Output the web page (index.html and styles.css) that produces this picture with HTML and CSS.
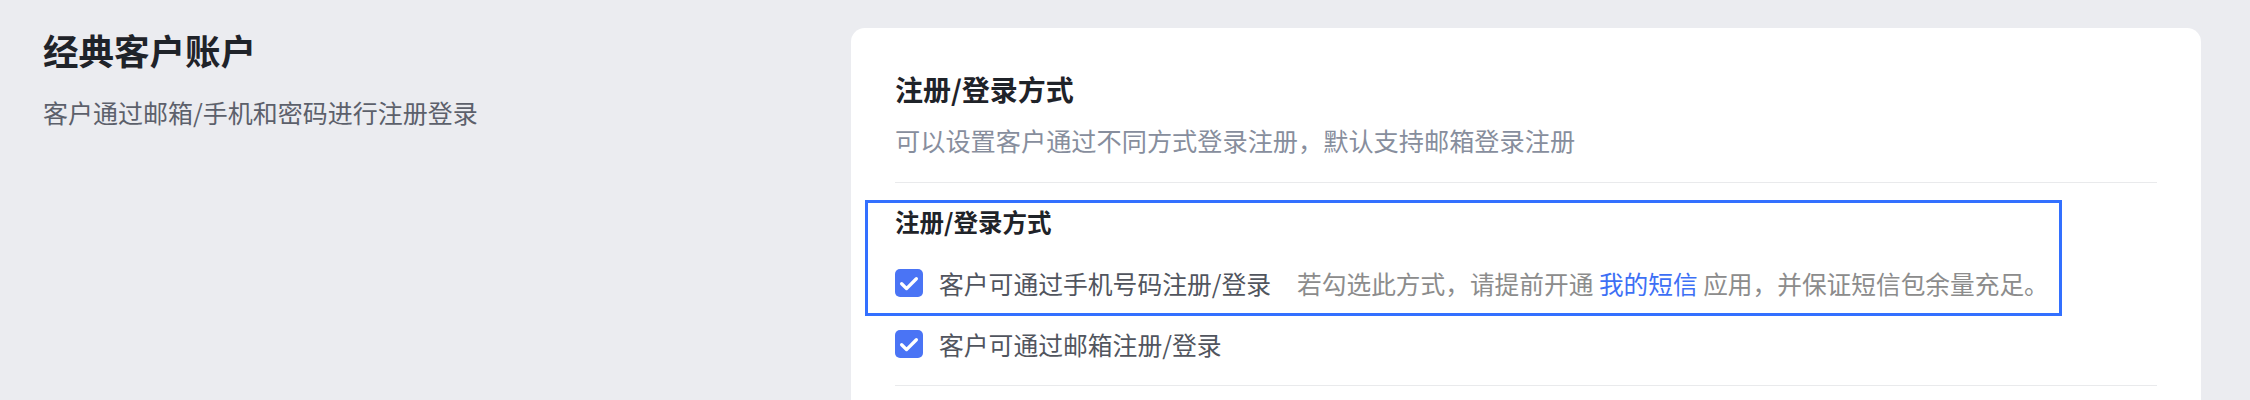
FILE: index.html
```html
<!DOCTYPE html>
<html lang="zh-CN">

<head>
  <meta charset="UTF-8">
  <meta name="viewport" content="width=device-width, initial-scale=1.0">
  <title>经典客户账户</title>
  <link rel="stylesheet" href="styles.css">
</head>

<body>
  <div class="page">
    <div class="intro">
      <h2 class="intro-title">经典客户账户</h2>
      <p class="intro-desc">客户通过邮箱/手机和密码进行注册登录</p>
    </div>

    <div class="card">
      <div class="card-head">
        <h3 class="card-title">注册/登录方式</h3>
        <p class="card-desc">可以设置客户通过不同方式登录注册，默认支持邮箱登录注册</p>
      </div>

      <div class="card-body">
        <!-- 引导高亮框 -->
        <div class="guide">
          <p class="field-label">注册/登录方式</p>
          <label class="check-row">
            <span class="check">
              <svg viewBox="0 0 16 16" width="16" height="16">
                <path d="M3.8 8.4L6.6 11.2L12.2 5.6" fill="none" stroke="#fff" stroke-width="1.9" stroke-linecap="round" stroke-linejoin="round"/>
              </svg>
            </span>
            <span class="check-text">客户可通过手机号码注册/登录</span>
            <span class="check-tip">若勾选此方式，请提前开通 <a href="#">我的短信</a> 应用，并保证短信包余量充足。</span>
          </label>
        </div>

        <label class="check-row second">
          <span class="check">
            <svg viewBox="0 0 16 16" width="16" height="16">
              <path d="M3.8 8.4L6.6 11.2L12.2 5.6" fill="none" stroke="#fff" stroke-width="1.9" stroke-linecap="round" stroke-linejoin="round"/>
            </svg>
          </span>
          <span class="check-text">客户可通过邮箱注册/登录</span>
        </label>
      </div>
    </div>
  </div>
</body>

</html>
```

FILE: styles.css
```css
* {
  margin: 0;
  padding: 0;
  box-sizing: border-box;
}

body {
  background-color: #ebecf0;
  font-family: "Noto Sans CJK SC", "Liberation Sans", sans-serif;
  overflow: hidden;
}

a {
  text-decoration: none;
}

.page {
  display: flex;
  padding: 28px 49px 0 43px;
}

.intro {
  flex: 1;
}

.intro-title {
  font-size: 35.5px;
  line-height: 44px;
  font-weight: 600;
  color: #1f2329;
}

.intro-desc {
  margin-top: 22px;
  font-size: 25px;
  line-height: 36px;
  color: #5c606b;
}

.card {
  width: 1350px;
  padding: 41px 44px 60px;
  background-color: #fff;
  border-radius: 14px;
}

.card-head {
  padding-bottom: 24px;
  border-bottom: 1px solid #e9eaec;
}

.card-title {
  font-size: 28px;
  line-height: 40px;
  font-weight: 600;
  color: #1f2329;
}

.card-desc {
  margin-top: 13px;
  font-size: 25.2px;
  line-height: 36px;
  color: #878e9d;
}

.card-body {
  padding-top: 17px;
  padding-bottom: 19px;
  border-bottom: 1px solid #e9eaec;
}

.guide {
  width: fit-content;
  margin-left: -30px;
  padding: 2px 10px 8px 27px;
  border: 3px solid #3370ff;
}

.field-label {
  font-size: 24.5px;
  line-height: 34px;
  font-weight: 600;
  color: #1f2329;
}

.check-row {
  display: flex;
  align-items: center;
  height: 44px;
  margin-top: 22px;
  font-size: 24.8px;
  white-space: nowrap;
}

.check-row.second {
  margin-top: 6px;
}

.check {
  display: flex;
  align-items: center;
  justify-content: center;
  width: 28px;
  height: 28px;
  margin-right: 16px;
  border-radius: 5px;
  background-color: #4a74f5;
}

.check svg {
  width: 28px;
  height: 28px;
}

.check-text {
  color: #51555e;
}

.check-tip {
  margin-left: 26px;
  font-size: 24.7px;
  color: #8c8c8c;
}

.check-tip a {
  color: #3d6ff5;
}
```
